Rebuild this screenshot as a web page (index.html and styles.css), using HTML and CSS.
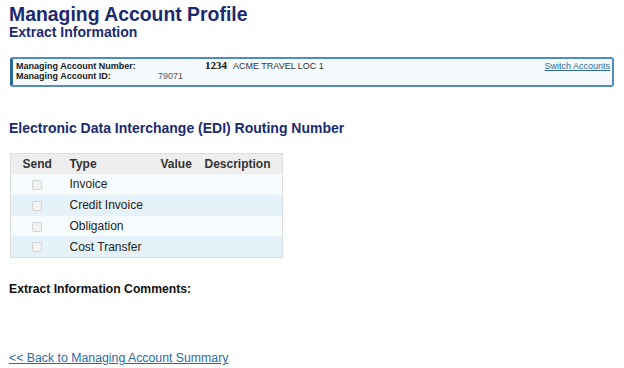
FILE: index.html
```html
<!DOCTYPE html>
<html lang="en">
<head>
<meta charset="utf-8">
<title>Managing Account Profile</title>
<link rel="stylesheet" href="styles.css">
</head>
<body>
<div class="page">
  <h1 class="title">Managing Account Profile</h1>
  <div class="subtitle">Extract Information</div>

  <div class="account-box">
    <div class="acct-row">
      <span class="acct-label label-number">Managing Account Number:</span>
      <span class="acct-num">1234</span>
      <span class="acct-name">ACME TRAVEL LOC 1</span>
      <a class="switch-link" href="#">Switch Accounts</a>
    </div>
    <div class="acct-row">
      <span class="acct-label label-id">Managing Account ID:</span>
      <span class="acct-id">79071</span>
    </div>
  </div>

  <h2 class="section-title">Electronic Data Interchange (EDI) Routing Number</h2>

  <table class="edi-table">
    <colgroup>
      <col class="c-send">
      <col class="c-type">
      <col class="c-value">
      <col class="c-desc">
    </colgroup>
    <thead>
      <tr>
        <th class="th-send">Send</th>
        <th>Type</th>
        <th>Value</th>
        <th>Description</th>
      </tr>
    </thead>
    <tbody>
      <tr class="odd">
        <td class="td-send"><input class="cb" type="checkbox" disabled></td>
        <td>Invoice</td><td></td><td></td>
      </tr>
      <tr class="even">
        <td class="td-send"><input class="cb" type="checkbox" disabled></td>
        <td>Credit Invoice</td><td></td><td></td>
      </tr>
      <tr class="odd">
        <td class="td-send"><input class="cb" type="checkbox" disabled></td>
        <td>Obligation</td><td></td><td></td>
      </tr>
      <tr class="even">
        <td class="td-send"><input class="cb" type="checkbox" disabled></td>
        <td>Cost Transfer</td><td></td><td></td>
      </tr>
    </tbody>
  </table>

  <div class="comments-title">Extract Information Comments:</div>

  <p class="back"><a class="back-link" href="#">&lt;&lt; Back to Managing Account Summary</a></p>
</div>
</body>
</html>
```

FILE: styles.css
```css
html, body {
  margin: 0;
  padding: 0;
  background: #ffffff;
}

body {
  font-family: "Liberation Sans", Arial, sans-serif;
  color: #222222;
}

.page {
  padding: 0 10px 0 9px;
}

.title {
  margin: 0;
  padding-top: 4px;
  font-size: 19.4px;
  line-height: 21px;
  font-weight: bold;
  color: #1c2a70;
}

.subtitle {
  font-size: 14px;
  line-height: 14px;
  font-weight: bold;
  color: #1c2a70;
}

.account-box {
  margin: 18px 0 0 1px;
  padding: 1px 2px 3px 3px;
  background: #f5fafd;
  border: 2px solid #4f8cc2;
  border-left: 3px solid #2b679c;
  border-radius: 3px;
  font-size: 9px;
  line-height: 11px;
}

.acct-row {
  display: flex;
  align-items: baseline;
  height: 11px;
}

.acct-label {
  font-weight: bold;
  color: #1a1a1a;
  flex: none;
}

.label-number {
  width: 189px;
}

.label-id {
  width: 142px;
}

.acct-num {
  font-family: "Liberation Serif", "Times New Roman", serif;
  font-weight: bold;
  font-size: 11px;
  color: #111111;
}

.acct-name {
  margin-left: 6px;
  color: #333333;
}

.acct-id {
  color: #555555;
}

.switch-link {
  margin-left: auto;
  color: #2d6aa3;
  text-decoration: underline;
}

.section-title {
  margin: 33px 0 0;
  font-size: 14px;
  line-height: 16px;
  font-weight: bold;
  color: #1c2a70;
}

.edi-table {
  margin: 17px 0 0 1px;
  width: 272px;
  table-layout: fixed;
  border-collapse: collapse;
  border: 1px solid #dddddd;
  font-size: 12px;
}

.c-send { width: 53px; }
.c-type { width: 91px; }
.c-value { width: 44px; }
.c-desc { width: 84px; }

.edi-table th {
  height: 20px;
  padding: 0 6px;
  text-align: left;
  font-weight: bold;
  color: #333333;
  background: #eeeeee;
  vertical-align: middle;
}

.edi-table th.th-send {
  text-align: center;
  padding: 0;
}

.edi-table td {
  height: 20.75px;
  padding: 0 6px;
  color: #222222;
  vertical-align: middle;
  line-height: 14px;
}

.edi-table td.td-send {
  text-align: center;
  padding: 0;
}

.edi-table tr.odd td {
  background: #f6fbfe;
}

.edi-table tr.even td {
  background: #e6f2fa;
}

.cb {
  appearance: none;
  -webkit-appearance: none;
  display: inline-block;
  width: 10px;
  height: 10px;
  margin: 0;
  border: 1px solid #d4d4d4;
  border-radius: 2px;
  background: #f3f3f3;
  vertical-align: middle;
}

.comments-title {
  margin-top: 24px;
  font-size: 12.2px;
  line-height: 14px;
  font-weight: bold;
  color: #111111;
}

.back {
  margin: 55px 0 0;
  font-size: 12.3px;
  line-height: 14px;
}

.back-link {
  color: #2d6aa3;
  text-decoration: underline;
}
```
